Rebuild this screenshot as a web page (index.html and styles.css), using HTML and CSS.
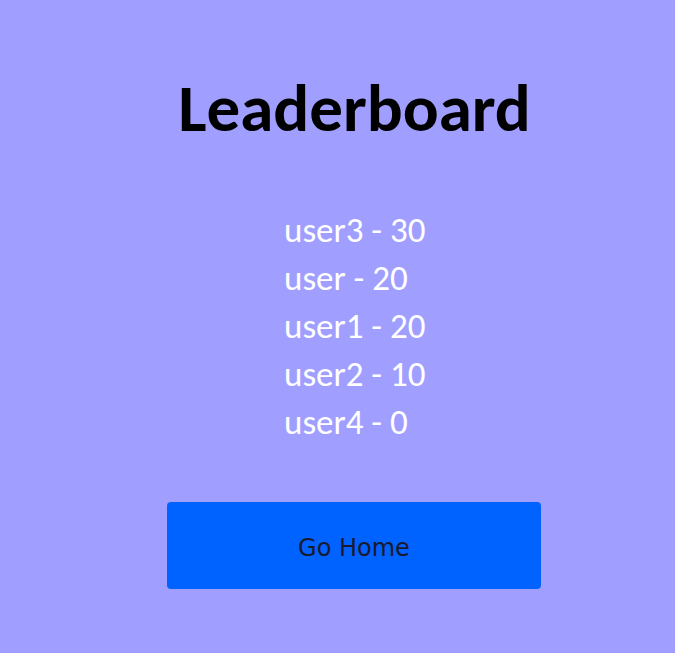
FILE: index.html
```html
<!DOCTYPE html>
<html>
<head>
<meta charset="utf-8">
<link rel="stylesheet" href="styles.css">
</head>
<body>
<main class="page">
  <h1 class="title">Leaderboard</h1>
  <ul class="scores">
    <li>user3 - 30</li>
    <li>user - 20</li>
    <li>user1 - 20</li>
    <li>user2 - 10</li>
    <li>user4 - 0</li>
  </ul>
  <button class="home-btn">Go Home</button>
</main>
</body>
</html>
```
FILE: styles.css
```css
html, body {
  margin: 0;
  padding: 0;
  background: #a09fff;
  height: 100%;
}
.page {
  display: flex;
  flex-direction: column;
  align-items: center;
  font-family: Carlito, Lato, sans-serif;
  padding-top: 68px;
}
.title {
  margin: 0;
  font-size: 67px;
  font-weight: 700;
  color: #000;
  line-height: 80px;
  margin-left: 34px;
}
.scores {
  list-style: none;
  margin: 58px 0 0 34px;
  padding: 0;
  color: #fff;
  font-size: 35px;
  line-height: 48px;
  width: 141px;
  white-space: nowrap;
}
.home-btn {
  margin-top: 56px;
  width: 374px;
  height: 87px;
  padding: 5px 0 0 0;
  border: none;
  border-radius: 4px;
  background: #0062ff;
  color: #1a1a2e;
  font-family: "DejaVu Sans", sans-serif;
  font-size: 24px;
  margin-left: 33px;
}
```
